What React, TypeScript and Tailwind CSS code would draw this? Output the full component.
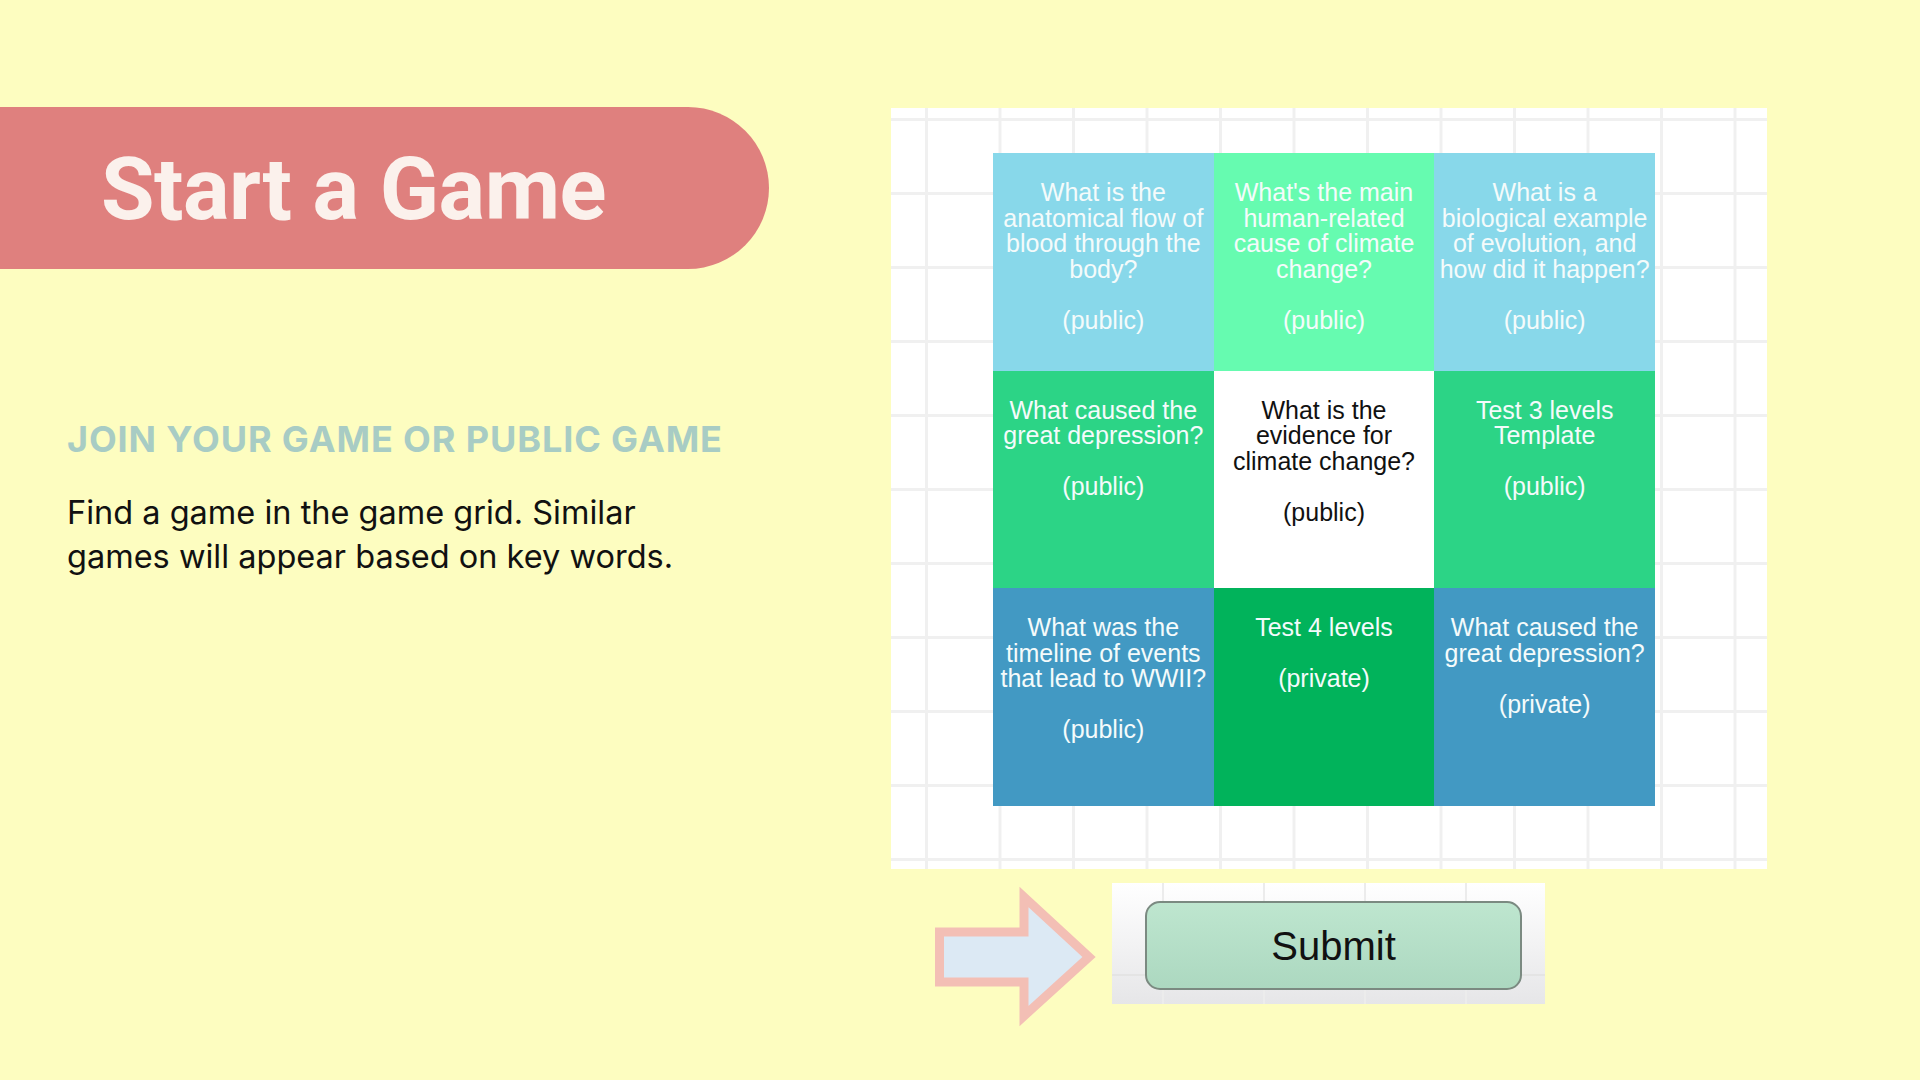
import { ReactNode } from 'react';

interface Game {
    lines: string[];
    status: 'public' | 'private';
    bg: string;
    dark?: boolean;
}

const games: Game[] = [
    { lines: ['What is the', 'anatomical flow of', 'blood through the', 'body?'], status: 'public', bg: 'bg-[#88d8ea]' },
    { lines: ["What's the main", 'human-related', 'cause of climate', 'change?'], status: 'public', bg: 'bg-[#66fbb0]' },
    { lines: ['What is a', 'biological example', 'of evolution, and', 'how did it happen?'], status: 'public', bg: 'bg-[#88d8ea]' },
    { lines: ['What caused the', 'great depression?'], status: 'public', bg: 'bg-[#2cd486]' },
    { lines: ['What is the', 'evidence for', 'climate change?'], status: 'public', bg: 'bg-white', dark: true },
    { lines: ['Test 3 levels', 'Template'], status: 'public', bg: 'bg-[#2cd486]' },
    { lines: ['What was the', 'timeline of events', 'that lead to WWII?'], status: 'public', bg: 'bg-[#4299c3]' },
    { lines: ['Test 4 levels'], status: 'private', bg: 'bg-[#01b35b]' },
    { lines: ['What caused the', 'great depression?'], status: 'private', bg: 'bg-[#4299c3]' },
];

function GameCell({ game }: { game: Game }) {
    return (
        <div
            className={`${game.bg} ${game.dark ? 'text-[#111]' : 'text-[#f4fbfb]'} pt-[27px] px-1 text-center text-[25px] leading-[25.5px] font-['Liberation_Sans',Arial,sans-serif]`}
        >
            {game.lines.map(line => (
                <div key={line} className="whitespace-nowrap">{line}</div>
            ))}
            <div className="h-[25.5px]" />
            <div>({game.status})</div>
        </div>
    );
}

function Arrow() {
    return (
        <svg width="164" height="142" viewBox="0 0 164 142" className="shrink-0">
            <polygon
                points="5.5,47 90,47 90,12 155,72 90,131 90,97 5.5,97"
                fill="#dce9f4"
                stroke="#f3bfb5"
                strokeWidth="9"
                strokeLinejoin="miter"
            />
        </svg>
    );
}

function Panel({ children, className = '' }: { children: ReactNode; className?: string }) {
    return <div className={`relative ${className}`}>{children}</div>;
}

export default function App() {
    return (
        <div className="w-[1920px] h-[1080px] bg-[#fdfdc0] overflow-hidden flex pt-[107px]">
            {/* left column */}
            <div className="w-[891px] shrink-0">
                <div className="w-[769px] h-[162px] bg-[#df807e] rounded-r-[81px] flex items-center pl-[101px]">
                    <h1 className="text-[87px] leading-none font-bold tracking-[-0.5px] text-[#fbf1ec] font-['Roboto',sans-serif] mt-[2px]">
                        Start a Game
                    </h1>
                </div>
                <div className="pl-[67px]">
                    <h2 className="mt-[152px] text-[36px] leading-[37px] font-bold tracking-[0.9px] text-[#a8ccc4] font-['Inter',sans-serif]">
                        JOIN YOUR GAME OR PUBLIC GAME
                    </h2>
                    <p className="mt-[33px] text-[32.5px] leading-[44px] text-[#111] font-['Inter',sans-serif]">
                        Find a game in the game grid. Similar
                        <br />
                        games will appear based on key words.
                    </p>
                </div>
            </div>

            {/* right column */}
            <div className="flex flex-col">
                <Panel className="w-[876px] h-[761px] mt-[1px] bg-white bg-[linear-gradient(to_right,#f0f0f0_3px,transparent_3px),linear-gradient(to_bottom,#f0f0f0_3px,transparent_3px)] bg-[size:73.5px_74px] bg-[position:34px_10px] pt-[45px] pl-[102px]">
                    <div className="w-[662px] h-[653px] grid grid-cols-3 grid-rows-3">
                        {games.map((g, i) => (
                            <GameCell key={i} game={g} />
                        ))}
                    </div>
                </Panel>

                <div className="flex items-start mt-[14px] ml-[43px] gap-[14px]">
                    <div className="mt-[2px]">
                        <Arrow />
                    </div>
                    <div className="w-[433px] h-[121px] bg-[linear-gradient(to_bottom,#ffffff,#e6e6e8)] relative pt-[18px] pl-[33px]">
                        <div className="absolute inset-0 bg-[linear-gradient(to_right,#ececec_2px,transparent_2px)] bg-[size:101px_100%] bg-[position:50px_0]" />
                        <div className="absolute left-0 right-0 top-[91px] h-[2px] bg-[#e4e4e4]" />
                        <button className="relative w-[377px] h-[89px] rounded-[15px] border-2 border-[#7b8a81] bg-[linear-gradient(to_bottom,#bee6cf,#acd8c0)] text-[40px] text-[#111] font-['Liberation_Sans',Arial,sans-serif]">
                            Submit
                        </button>
                    </div>
                </div>
            </div>
        </div>
    );
}
